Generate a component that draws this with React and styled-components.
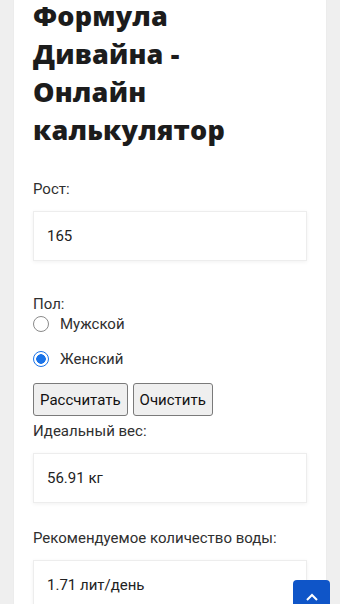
import React, { useState } from "react";
import styled, { createGlobalStyle } from "styled-components";

const GlobalStyle = createGlobalStyle`
  html, body {
    margin: 0;
    padding: 0;
    background: #efefef;
  }
  body {
    font-family: Roboto, "Liberation Sans", Arial, sans-serif;
    color: #2b2b2b;
    overflow: hidden;
  }
`;

const Page = styled.div`
  padding: 0 14px;
  min-height: 700px;
`;

const Card = styled.main`
  background: #ffffff;
  padding: 0 19px 60px;
  min-height: 700px;
  box-shadow: 0 0 2px rgba(0, 0, 0, 0.04);
`;

const Title = styled.h1`
  margin: -3px 0 30px;
  font-family: "Open Sans", Inter, sans-serif;
  font-weight: 800;
  font-size: 27px;
  line-height: 38px;
  color: #1c1c1c;
  letter-spacing: 0.2px;
`;

const Label = styled.div`
  font-size: 15px;
  line-height: 20px;
  color: #2f2f2f;
  margin-top: ${(p) => p.$top || 0}px;
  margin-bottom: ${(p) => (p.$bottom === undefined ? 12 : p.$bottom)}px;
`;

const Field = styled.div`
  box-sizing: border-box;
  height: 50px;
  border: 1px solid #ededed;
  box-shadow: 0 1px 4px rgba(0, 0, 0, 0.06);
  padding: 0 13px;
  display: flex;
  align-items: center;
  font-size: 15px;
  color: #222;
`;

const RadioRow = styled.label`
  display: flex;
  align-items: center;
  height: 20px;
  margin-bottom: 15px;
  font-size: 15px;
  color: #2f2f2f;
  cursor: pointer;
`;

const Radio = styled.input`
  appearance: none;
  box-sizing: border-box;
  width: 16px;
  height: 16px;
  margin: 0 11px 0 0;
  border-radius: 50%;
  border: 1px solid #8a8a8a;
  background: #fff;
  &:checked {
    border: 1.5px solid #1a73e8;
    background: radial-gradient(circle, #1a73e8 0 4.5px, #fff 5px);
  }
`;

const Buttons = styled.div`
  display: flex;
  gap: 5px;
  margin-top: -1px;
`;

const Button = styled.button`
  height: 33px;
  padding: 0 6px;
  border: 1px solid #7a7a7a;
  border-radius: 3px;
  background: #efefef;
  font-family: Roboto, "Liberation Sans", Arial, sans-serif;
  font-size: 15px;
  color: #111;
`;

const ToTop = styled.button`
  position: fixed;
  right: 10px;
  bottom: -16px;
  width: 37px;
  height: 40px;
  border: none;
  border-radius: 4px;
  background: #0f55c8;
  display: flex;
  justify-content: center;
  padding-top: 12px;
`;

export default function App() {
  const [sex, setSex] = useState("f");
  return (
    <>
      <GlobalStyle />
      <Page>
        <Card>
          <Title>
            Формула
            <br />
            Дивайна -
            <br />
            Онлайн
            <br />
            калькулятор
          </Title>
          <Label>Рост:</Label>
          <Field>165</Field>
          <Label $top={33} $bottom={0}>Пол:</Label>
          <RadioRow>
            <Radio type="radio" name="sex" checked={sex === "m"} onChange={() => setSex("m")} />
            Мужской
          </RadioRow>
          <RadioRow>
            <Radio type="radio" name="sex" checked={sex === "f"} onChange={() => setSex("f")} />
            Женский
          </RadioRow>
          <Buttons>
            <Button>Рассчитать</Button>
            <Button>Очистить</Button>
          </Buttons>
          <Label $top={5}>Идеальный вес:</Label>
          <Field>56.91 кг</Field>
          <Label $top={25}>Рекомендуемое количество воды:</Label>
          <Field>1.71 лит/день</Field>
        </Card>
      </Page>
      <ToTop aria-label="Наверх">
        <svg width="14" height="10" viewBox="0 0 14 10">
          <path d="M2 8 L7 3 L12 8" fill="none" stroke="#fff" strokeWidth="2" />
        </svg>
      </ToTop>
    </>
  );
}
